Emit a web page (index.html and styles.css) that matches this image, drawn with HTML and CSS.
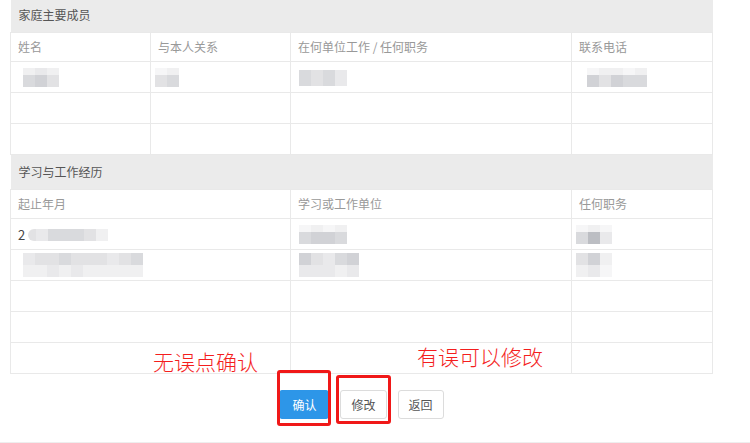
FILE: index.html
```html
<!DOCTYPE html>
<html>
  <head>
    <title>信息确认</title>
    <meta charset="utf-8" />
    <link rel="stylesheet" href="styles.css">
  </head>
  <body>
    <div class="page">
      <table class="info">
        <colgroup>
          <col class="col-a" />
          <col class="col-b" />
          <col class="col-c" />
          <col class="col-d" />
        </colgroup>
        <tr class="section">
          <td colspan="4">家庭主要成员</td>
        </tr>
        <tr class="head">
          <td>姓名</td>
          <td>与本人关系</td>
          <td>在何单位工作 / 任何职务</td>
          <td>联系电话</td>
        </tr>
        <tr>
          <td>
            <span class="mosaic ml5">
              <span class="mrow lite"><i class="g6"></i><i class="g5"></i><i class="g6"></i></span>
              <span class="mrow"><i class="g3"></i><i class="g2"></i><i class="g4"></i></span>
            </span>
          </td>
          <td>
            <span class="mosaic ml-3">
              <span class="mrow lite"><i class="g7"></i><i class="g6"></i></span>
              <span class="mrow"><i class="g4"></i><i class="g3"></i></span>
            </span>
          </td>
          <td>
            <span class="mosaic ml1">
              <span class="mrow tall"><i class="g3"></i><i class="g4"></i><i class="g3"></i><i class="g5"></i></span>
            </span>
          </td>
          <td>
            <span class="mosaic ml8">
              <span class="mrow lite"><i class="g7"></i><i class="g6"></i><i class="g6"></i><i class="g7"></i><i class="g6"></i></span>
              <span class="mrow"><i class="g2"></i><i class="g4"></i><i class="g2"></i><i class="g3"></i><i class="g3"></i></span>
            </span>
          </td>
        </tr>
        <tr>
          <td></td>
          <td></td>
          <td></td>
          <td></td>
        </tr>
        <tr>
          <td></td>
          <td></td>
          <td></td>
          <td></td>
        </tr>
        <tr class="section">
          <td colspan="4">学习与工作经历</td>
        </tr>
        <tr class="head">
          <td colspan="2">起止年月</td>
          <td>学习或工作单位</td>
          <td>任何职务</td>
        </tr>
        <tr>
          <td colspan="2">
            <span class="value">2</span>
            <span class="mosaic">
              <span class="mrow"><i class="g4 half"></i><i class="g5"></i><i class="g3"></i><i class="g3"></i><i class="g3"></i><i class="g4"></i><i class="g6"></i></span>
            </span>
          </td>
          <td>
            <span class="mosaic ml1">
              <span class="mrow lite"><i class="g7"></i><i class="g6"></i><i class="g7"></i><i class="g6"></i></span>
              <span class="mrow"><i class="g3"></i><i class="g2"></i><i class="g2"></i><i class="g3"></i></span>
            </span>
          </td>
          <td>
            <span class="mosaic ml-3">
              <span class="mrow lite"><i class="g7"></i><i class="g6"></i><i class="g7"></i></span>
              <span class="mrow"><i class="g3"></i><i class="g1"></i><i class="g5"></i></span>
            </span>
          </td>
        </tr>
        <tr>
          <td colspan="2">
            <span class="mosaic ml5">
              <span class="mrow"><i class="g5"></i><i class="g4"></i><i class="g4"></i><i class="g3"></i><i class="g4"></i><i class="g4"></i><i class="g4"></i><i class="g5"></i><i class="g4"></i><i class="g3"></i></span>
              <span class="mrow"><i class="g6"></i><i class="g6"></i><i class="g5"></i><i class="g6"></i><i class="g5"></i><i class="g6"></i><i class="g6"></i><i class="g6"></i><i class="g6"></i><i class="g6"></i></span>
            </span>
          </td>
          <td>
            <span class="mosaic ml1">
              <span class="mrow"><i class="g2"></i><i class="g4"></i><i class="g5"></i><i class="g3"></i><i class="g2"></i></span>
              <span class="mrow"><i class="g5"></i><i class="g5"></i><i class="g5"></i><i class="g6"></i><i class="g5"></i></span>
            </span>
          </td>
          <td>
            <span class="mosaic ml-3">
              <span class="mrow"><i class="g4"></i><i class="g2"></i><i class="g6"></i></span>
              <span class="mrow"><i class="g6"></i><i class="g5"></i><i class="g7"></i></span>
            </span>
          </td>
        </tr>
        <tr>
          <td colspan="2"></td>
          <td></td>
          <td></td>
        </tr>
        <tr>
          <td colspan="2"></td>
          <td></td>
          <td></td>
        </tr>
        <tr>
          <td colspan="2"></td>
          <td></td>
          <td></td>
        </tr>
      </table>

      <div class="actions">
        <button class="btn btn-primary">确认</button>
        <button class="btn">修改</button>
        <button class="btn">返回</button>
      </div>

      <div class="note note-confirm">无误点确认</div>
      <div class="note note-edit">有误可以修改</div>
      <div class="mark mark-confirm"></div>
      <div class="mark mark-edit"></div>
    </div>
    <div class="footer-line"></div>
  </body>
</html>
```

FILE: styles.css
```css
body {
  margin: 0;
  font-family: "Noto Sans CJK SC", "Noto Sans", sans-serif;
  font-size: 12px;
  color: #333;
  background-color: #fff;
}

.page {
  position: relative;
  margin-top: -2px;
  padding-left: 10px;
}

.info {
  width: 703px;
  border-collapse: collapse;
  table-layout: fixed;
}

.col-a,
.col-b {
  width: 140px;
}

.col-c {
  width: 281px;
}

.info td {
  height: 30px;
  padding: 0 7px;
  border: 1px solid #e9e9e9;
  line-height: 16px;
  white-space: nowrap;
  overflow: hidden;
}

.info .section td {
  height: 34px;
  padding: 0 8px;
  border: none;
  background-color: #ebebeb;
  color: #555;
}

.info .head td {
  height: 28px;
  color: #999;
}

.value {
  vertical-align: middle;
  font-size: 13px;
  color: #444;
}

.mosaic {
  display: inline-flex;
  flex-direction: column;
  vertical-align: middle;
}

.mrow {
  display: flex;
}

.mrow i {
  display: block;
  width: 12px;
  height: 12px;
}

.mrow.lite i {
  height: 7px;
}

.mrow.tall i {
  height: 16px;
}

.mrow i.half {
  width: 8px;
  border-radius: 6px 0 0 6px;
}

.ml-3 { margin-left: -3px; }
.ml1 { margin-left: 1px; }
.ml5 { margin-left: 5px; }
.ml8 { margin-left: 8px; }

.g1 { background-color: #bcbec3; }
.g2 { background-color: #d1d2d6; }
.g3 { background-color: #d9dadd; }
.g4 { background-color: #e2e2e4; }
.g5 { background-color: #e9e9eb; }
.g6 { background-color: #f0f0f1; }
.g7 { background-color: #f6f6f7; }

.actions {
  display: flex;
  justify-content: center;
  gap: 11px;
  width: 703px;
  margin-top: 16px;
}

.btn {
  height: 29px;
  padding: 0 10px;
  border: 1px solid #dcdcdc;
  border-radius: 3px;
  background-color: #fff;
  color: #555;
  font-family: inherit;
  font-size: 12px;
  cursor: pointer;
}

.btn-primary {
  padding: 0 12px;
  border-color: #2d96e8;
  background-color: #2d96e8;
  color: #fff;
}

.note {
  position: absolute;
  font-size: 21px;
  font-weight: 300;
  line-height: 21px;
  color: #f41e1e;
  white-space: nowrap;
}

.note-confirm {
  top: 353px;
  left: 153px;
}

.note-edit {
  top: 348px;
  left: 417px;
}

.mark {
  position: absolute;
  border: 3px solid #f01818;
  border-radius: 3px;
}

.mark-confirm {
  top: 372px;
  left: 277px;
  width: 48px;
  height: 50px;
}

.mark-edit {
  top: 377px;
  left: 336px;
  width: 49px;
  height: 43px;
}

.footer-line {
  margin-top: 23px;
  border-top: 1px solid #eee;
}
```
